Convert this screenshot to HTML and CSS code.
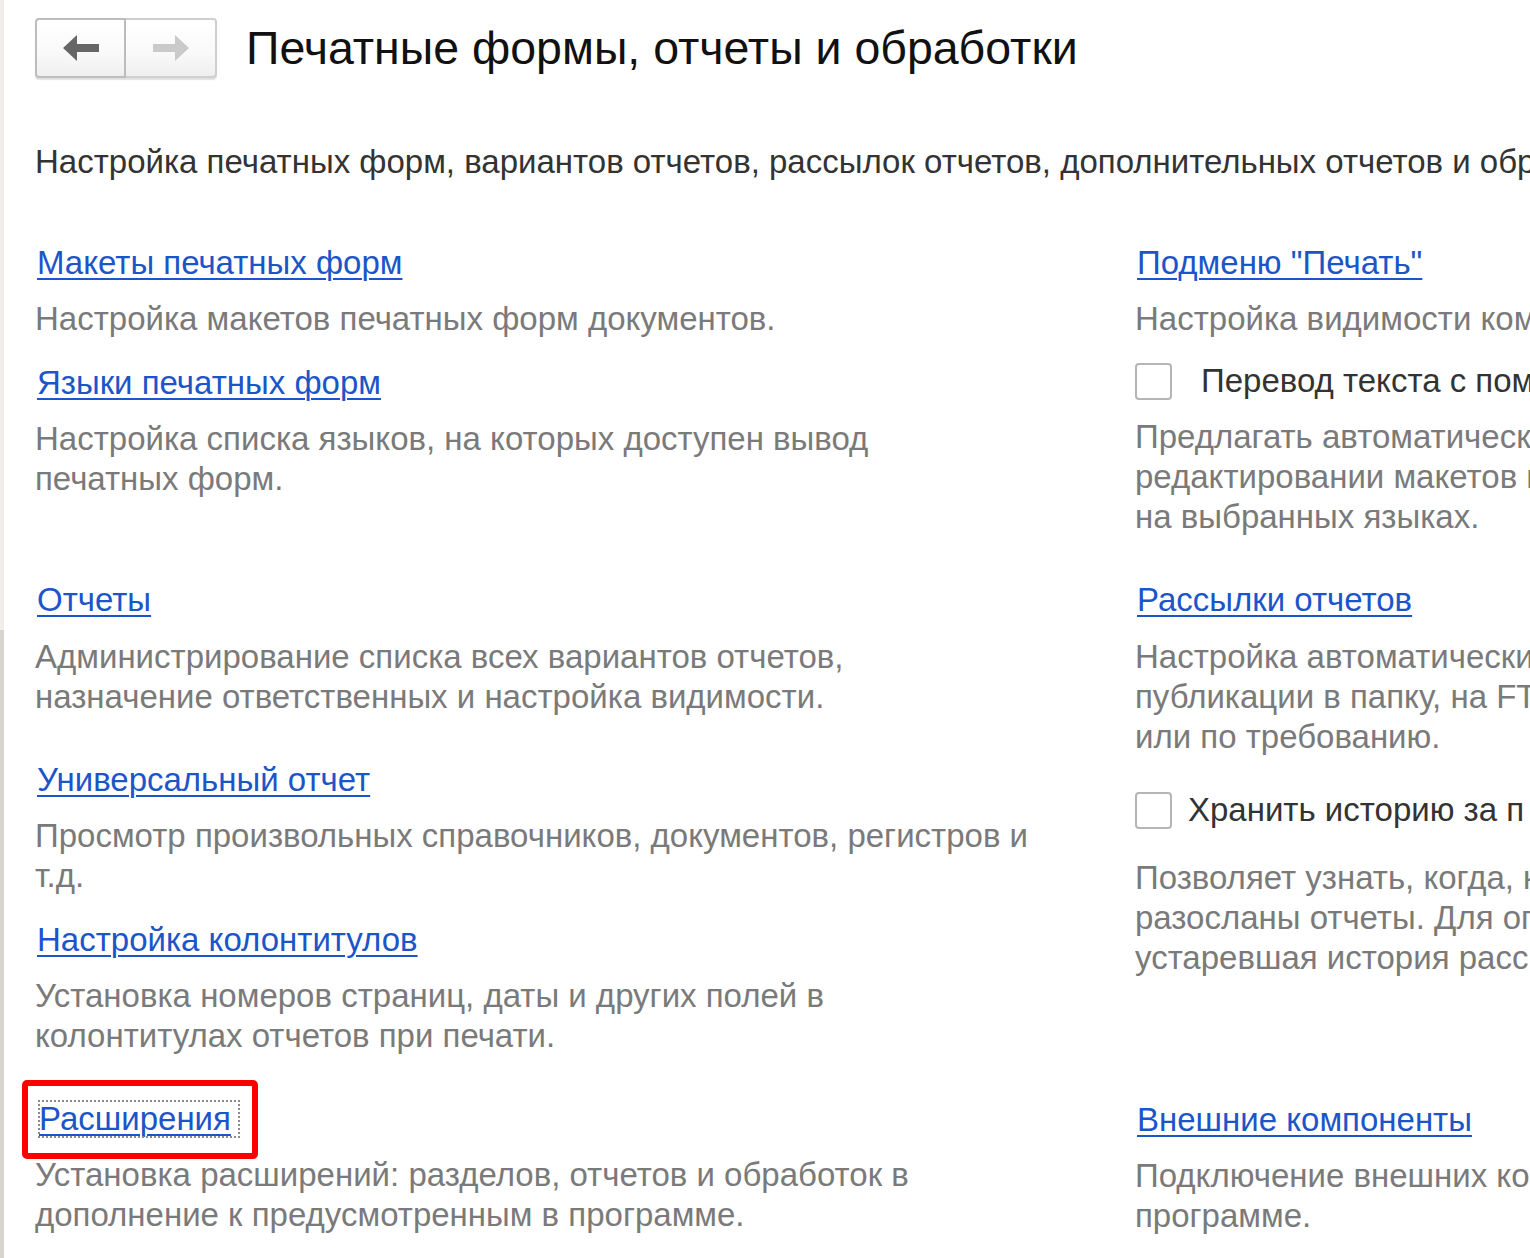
FILE: index.html
```html
<!DOCTYPE html>
<html lang="ru">
<head>
<meta charset="utf-8">
<title>Печатные формы, отчеты и обработки</title>
<link rel="stylesheet" href="styles.css">
</head>
<body>
<div class="shell">
  <div class="edge"></div>
  <main class="page">
    <header class="header">
      <div class="nav">
        <button class="nav-btn nav-back" type="button" aria-label="Назад">
          <svg width="36" height="26" viewBox="0 0 36 26"><path d="M0 13 L14 0 L14 9 L36 9 L36 17 L14 17 L14 26 Z" fill="#666666"/></svg>
        </button>
        <button class="nav-btn nav-fwd" type="button" aria-label="Вперед">
          <svg width="36" height="26" viewBox="0 0 36 26"><path d="M36 13 L22 0 L22 9 L0 9 L0 17 L22 17 L22 26 Z" fill="#cacaca"/></svg>
        </button>
      </div>
      <h1 class="title">Печатные формы, отчеты и обработки</h1>
    </header>

    <p class="intro">Настройка печатных форм, вариантов отчетов, рассылок отчетов, дополнительных отчетов и обработок.</p>

    <div class="columns">
      <section class="col col-left">
        <a class="link" href="#">Макеты печатных форм</a>
        <p class="desc">Настройка макетов печатных форм документов.</p>

        <a class="link gap-s" href="#">Языки печатных форм</a>
        <p class="desc">Настройка списка языков, на которых доступен вывод<br>печатных форм.</p>

        <a class="link gap-l" href="#">Отчеты</a>
        <p class="desc desc-b">Администрирование списка всех вариантов отчетов,<br>назначение ответственных и настройка видимости.</p>

        <a class="link gap-m" href="#">Универсальный отчет</a>
        <p class="desc">Просмотр произвольных справочников, документов, регистров и<br>т.д.</p>

        <a class="link gap-s" href="#">Настройка колонтитулов</a>
        <p class="desc">Установка номеров страниц, даты и других полей в<br>колонтитулах отчетов при печати.</p>

        <div class="link-wrap gap-m">
          <a class="link link-focus" href="#">Расширения</a>
          <span class="highlight"></span>
        </div>
        <p class="desc">Установка расширений: разделов, отчетов и обработок в<br>дополнение к предусмотренным в программе.</p>
      </section>

      <section class="col col-right">
        <a class="link" href="#">Подменю "Печать"</a>
        <p class="desc">Настройка видимости команд печати.</p>

        <label class="check check-a">
          <span class="box"></span>
          <span class="check-text">Перевод текста с помощью</span>
        </label>
        <p class="desc">Предлагать автоматический<br>редактировании макетов п<br>на выбранных языках.</p>

        <a class="link gap-m" href="#">Рассылки отчетов</a>
        <p class="desc desc-b">Настройка автоматически<br>публикации в папку, на FT<br>или по требованию.</p>

        <label class="check check-b">
          <span class="box"></span>
          <span class="check-text">Хранить историю за п</span>
        </label>
        <p class="desc desc-c">Позволяет узнать, когда, к<br>разосланы отчеты. Для оп<br>устаревшая история расс</p>

        <a class="link gap-xl" href="#">Внешние компоненты</a>
        <p class="desc">Подключение внешних ко<br>программе.</p>
      </section>
    </div>
  </main>
</div>
</body>
</html>
```

FILE: styles.css
```css
html, body {
  margin: 0;
  padding: 0;
  width: 1530px;
  height: 1258px;
  overflow: hidden;
  background: #ffffff;
}

body {
  font-family: "Liberation Sans", Arial, sans-serif;
  color: #333333;
}

.shell {
  display: flex;
  height: 1258px;
}

.edge {
  flex: 0 0 4px;
  background: linear-gradient(to bottom, #efeeea 0, #efeeea 630px, #d5d4cf 630px, #d5d4cf 100%);
}

.page {
  flex: 1 1 auto;
  padding: 18px 0 0 31px;
  min-width: 0;
  white-space: nowrap;
  overflow: hidden;
}

.header {
  display: flex;
  align-items: center;
  height: 60px;
}

.nav {
  display: flex;
  height: 60px;
}

.nav-btn {
  width: 91px;
  height: 60px;
  margin: 0;
  padding: 0;
  display: flex;
  align-items: center;
  justify-content: center;
  border: 2px solid #cfcfcf;
  background: linear-gradient(to bottom, #ffffff 0%, #f9f9f9 60%, #efefef 100%);
  box-shadow: 0 2px 1px rgba(0, 0, 0, 0.12);
  cursor: pointer;
}

.nav-back {
  border-color: #bdbdbd;
  border-radius: 4px 0 0 4px;
}

.nav-fwd {
  width: 91px;
  border-left: none;
  border-radius: 0 4px 4px 0;
}

.title {
  margin: 0 0 0 29px;
  font-size: 46.5px;
  font-weight: normal;
  color: #111111;
  line-height: 60px;
}

.intro {
  margin: 64px 0 0 0;
  font-size: 33px;
  line-height: 40px;
  color: #333333;
}

.columns {
  display: grid;
  grid-template-columns: 1100px 1fr;
  margin-top: 61px;
}

.col {
  display: flex;
  flex-direction: column;
  align-items: flex-start;
  min-width: 0;
}

.col-right {
  overflow: hidden;
}

.link {
  font-size: 33px;
  line-height: 40px;
  color: #1c55c9;
  text-decoration: underline;
  text-decoration-thickness: 2px;
  text-underline-offset: 4px;
  margin-left: 2px;
}

.desc {
  margin: 16px 0 0 0;
  font-size: 33px;
  line-height: 40px;
  color: #7a7a7a;
}

.desc-b { margin-top: 17px; }
.desc-c { margin-top: 28px; }

.gap-s { margin-top: 24px; }
.gap-m { margin-top: 43px; }
.gap-l { margin-top: 81px; }
.gap-xl { margin-top: 122px; }

.link-wrap {
  position: relative;
  height: 40px;
}

.link-focus {
  display: inline-block;
  margin-left: 2px;
  padding: 0 10px 0 2px;
  outline: 2px dotted #8a8a8a;
  outline-offset: -3px;
}

.highlight {
  position: absolute;
  left: -13px;
  top: -19px;
  width: 224px;
  height: 67px;
  border: 6px solid #ff0000;
  border-radius: 5px;
  pointer-events: none;
}

.check {
  display: flex;
  align-items: center;
  height: 40px;
  font-size: 33px;
  color: #333333;
}

.check-a { margin-top: 22px; }
.check-b { margin-top: 33px; }

.box {
  display: block;
  width: 33px;
  height: 33px;
  border: 2px solid #b5b5b5;
  border-radius: 4px;
  background: #ffffff;
  flex: 0 0 auto;
}

.check-a .check-text { margin-left: 29px; }
.check-b .check-text { margin-left: 16px; }
```
